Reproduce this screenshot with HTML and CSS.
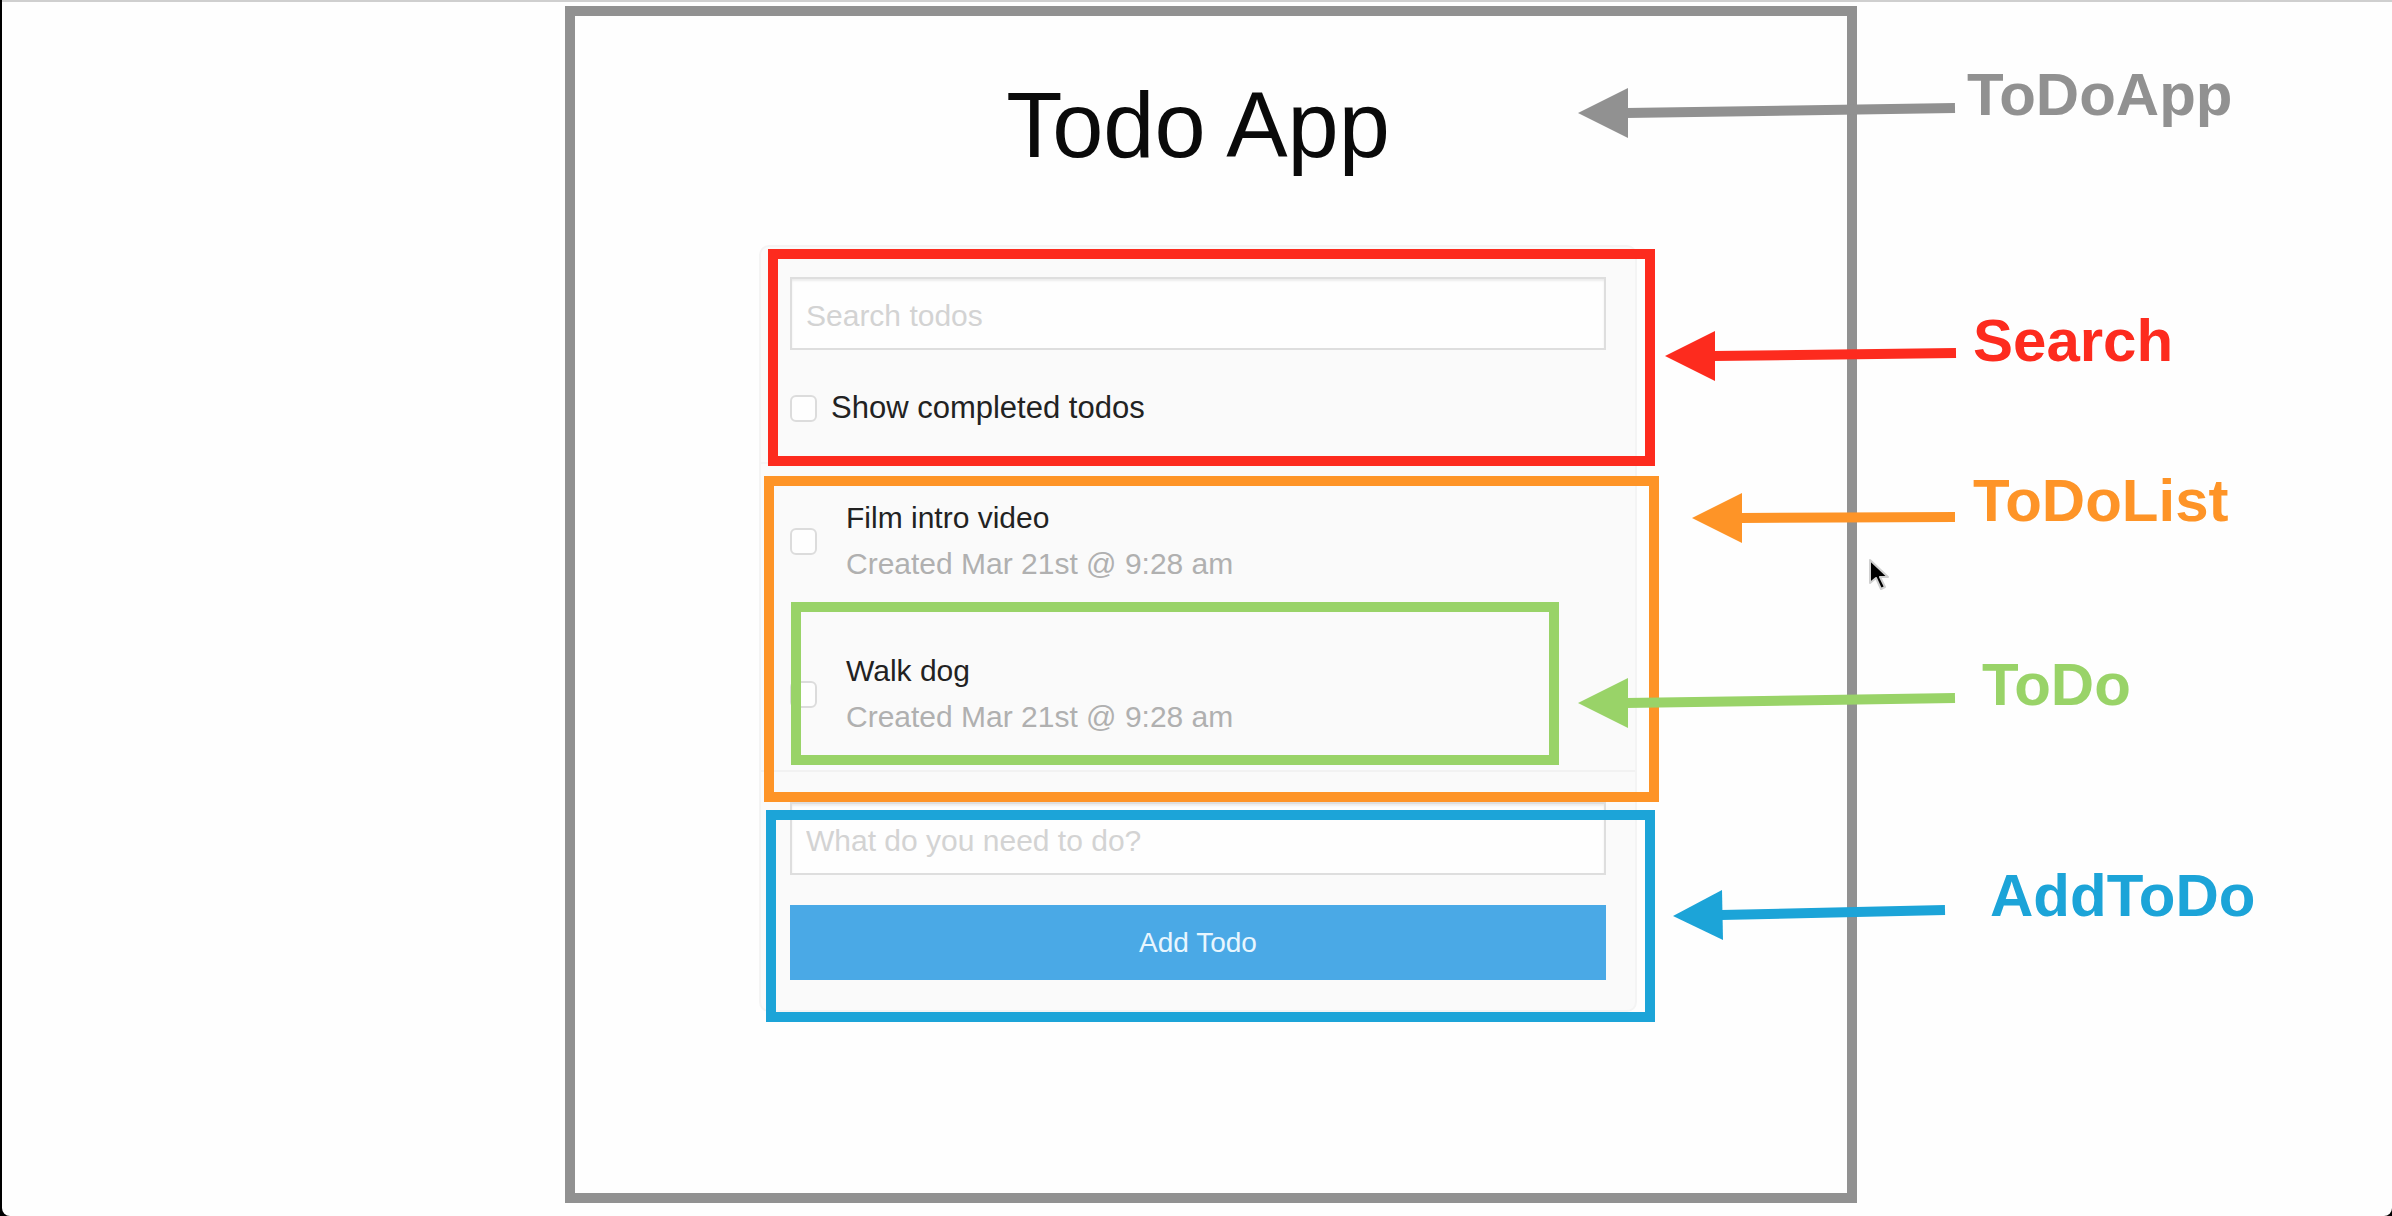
FILE: index.html
```html
<!DOCTYPE html>
<html lang="en">
<head>
<meta charset="utf-8">
<title>Todo App</title>
<link rel="stylesheet" href="styles.css">
</head>
<body>
<main class="app">
  <div class="frame frame-app"></div>
  <div class="callout callout-app">
    <svg class="arrow" width="377" height="54" viewBox="0 0 377 54" aria-hidden="true"><path d="M48 26 377 21" stroke="currentColor" stroke-width="10"/><path d="M0 26 50 1V51Z" fill="currentColor"/></svg>
    <span>ToDoApp</span>
  </div>

  <h1 class="title">Todo App</h1>

  <div class="card">
    <section class="search">
      <input class="field" type="text" placeholder="Search todos" aria-label="Search todos">
      <label class="toggle"><input class="check" type="checkbox">Show completed todos</label>
      <div class="frame frame-search"></div>
      <div class="callout callout-search">
        <svg class="arrow" width="291" height="54" viewBox="0 0 291 54" aria-hidden="true"><path d="M48 23 291 20" stroke="currentColor" stroke-width="10"/><path d="M0 23 50 -2V48Z" fill="currentColor"/></svg>
        <span>Search</span>
      </div>
    </section>

    <section class="list">
      <ul class="todos">
        <li class="todo">
          <input class="check" type="checkbox" id="todo-1">
          <label class="todo-text" for="todo-1">Film intro video<span class="created">Created Mar 21st @ 9:28 am</span></label>
        </li>
        <li class="todo">
          <input class="check" type="checkbox" id="todo-2">
          <label class="todo-text" for="todo-2">Walk dog<span class="created">Created Mar 21st @ 9:28 am</span></label>
          <div class="frame frame-todo"></div>
          <div class="callout callout-todo">
            <svg class="arrow" width="377" height="54" viewBox="0 0 377 54" aria-hidden="true"><path d="M48 26 377 21" stroke="currentColor" stroke-width="10"/><path d="M0 26 50 1V51Z" fill="currentColor"/></svg>
            <span>ToDo</span>
          </div>
        </li>
      </ul>
      <div class="frame frame-list"></div>
      <div class="callout callout-list">
        <svg class="arrow" width="263" height="54" viewBox="0 0 263 54" aria-hidden="true"><path d="M48 25 263 24" stroke="currentColor" stroke-width="10"/><path d="M0 25 50 0V50Z" fill="currentColor"/></svg>
        <span>ToDoList</span>
      </div>
    </section>

    <form class="add">
      <input class="field" type="text" placeholder="What do you need to do?" aria-label="New todo">
      <button class="button" type="button">Add Todo</button>
      <div class="frame frame-add"></div>
      <div class="callout callout-add">
        <svg class="arrow" width="272" height="54" viewBox="0 0 272 54" aria-hidden="true"><path d="M48 27 272 22" stroke="currentColor" stroke-width="10"/><path d="M0 28 49 2 50 52Z" fill="currentColor"/></svg>
        <span>AddToDo</span>
      </div>
    </form>
  </div>

  <svg class="pointer" width="24" height="38" viewBox="0 0 24 38" aria-hidden="true"><path d="M2 3V26L8 21 13 32 17 30 12 20H20Z" fill="#000" stroke="#d0d0d0" stroke-width="2" stroke-linejoin="round"/></svg>
</main>
</body>
</html>
```

FILE: styles.css
```css
* {
  box-sizing: border-box;
}

html {
  background: #000;
}

body {
  margin: 0 0 0 2px;
  padding-left: 2px;
  min-height: 100vh;
  border-top: 2px solid #cfcfcf;
  border-radius: 0 0 8px 8px;
  background: #fefefe;
  color: #222;
  font: 30px/36px "Liberation Sans", Arial, sans-serif;
}

.app {
  position: relative;
  max-width: 878px;
  min-height: calc(100vh - 2px);
  margin: 0 auto;
  padding: 73px 0 80px;
}

.title {
  margin: 0 0 70px;
  color: #0a0a0a;
  font-size: 92px;
  font-weight: 400;
  line-height: 100px;
  text-align: center;
}

.card {
  border: 2px solid #f4f4f4;
  border-radius: 10px;
  background: #fafafa;
}

.search,
.list,
.add {
  position: relative;
}

.search,
.add {
  display: flex;
  flex-direction: column;
  padding: 30px 29px;
}

.search {
  gap: 40px;
  padding-bottom: 36px;
  border-bottom: 2px solid #f4f4f4;
}

.add {
  gap: 30px;
}

.field {
  width: 100%;
  height: 73px;
  padding: 4px 14px 0;
  border: 2px solid #dedede;
  border-radius: 0;
  background: #fefefe;
  box-shadow: inset 0 2px 2px #ececec;
  color: #222;
  font: inherit;
}

.field::placeholder {
  color: #d3d3d3;
  opacity: 1;
}

.toggle {
  display: flex;
  align-items: center;
  gap: 14px;
  font-size: 31px;
}

.check {
  flex: none;
  appearance: none;
  width: 27px;
  height: 27px;
  margin: 0;
  border: 2px solid #dcdcdc;
  border-radius: 6px;
  background: #fefefe;
}

.todos {
  margin: 0;
  padding: 0;
  border-bottom: 2px solid #f2f2f2;
  list-style: none;
}

.todo {
  position: relative;
  display: flex;
  align-items: center;
  gap: 29px;
  padding: 31px 29px 30px;
  line-height: 46px;
}

.created {
  display: block;
  color: #b0b0b0;
}

.button {
  height: 75px;
  border: 0;
  background: #4aa9e6;
  color: #e8f6fe;
  font: inherit;
  font-size: 28px;
}

/* Outlines that mark each component's bounds */
.frame {
  position: absolute;
  z-index: 2;
  border: 10px solid;
  pointer-events: none;
}

.frame-app {
  z-index: 1;
  inset: 4px -220px 13px -194px;
  color: #919191;
}

.frame-search {
  inset: 2px -20px -4px 7px;
  color: #fd2b1e;
}

.frame-list {
  inset: 12px -24px -30px 3px;
  color: #fe9427;
}

.frame-todo {
  inset: -15px 76px 5px 30px;
  color: #99d368;
}

.frame-add {
  inset: 38px -20px -12px 5px;
  color: #1ca4d8;
}

/* Component names with an arrow that points at the outline */
.callout {
  position: absolute;
  z-index: 3;
  display: flex;
  align-items: flex-start;
  font-size: 60px;
  font-weight: 700;
  line-height: 60px;
  white-space: nowrap;
}

.arrow {
  flex: none;
  margin-top: 22px;
  overflow: visible;
}

.callout-app {
  top: 63px;
  left: calc(100% - 59px);
  gap: 12px;
  color: #919191;
}

.callout-search {
  top: 64px;
  left: calc(100% + 30px);
  gap: 17px;
  color: #fd2b1e;
}

.callout-list {
  top: 7px;
  left: calc(100% + 57px);
  gap: 18px;
  color: #fe9427;
}

.callout-todo {
  top: 38px;
  left: calc(100% - 57px);
  gap: 27px;
  color: #99d368;
}

.callout-add {
  top: 94px;
  left: calc(100% + 38px);
  gap: 45px;
  color: #1ca4d8;
}

.pointer {
  position: absolute;
  z-index: 3;
  top: 555px;
  left: calc(100% + 231px);
}
```
